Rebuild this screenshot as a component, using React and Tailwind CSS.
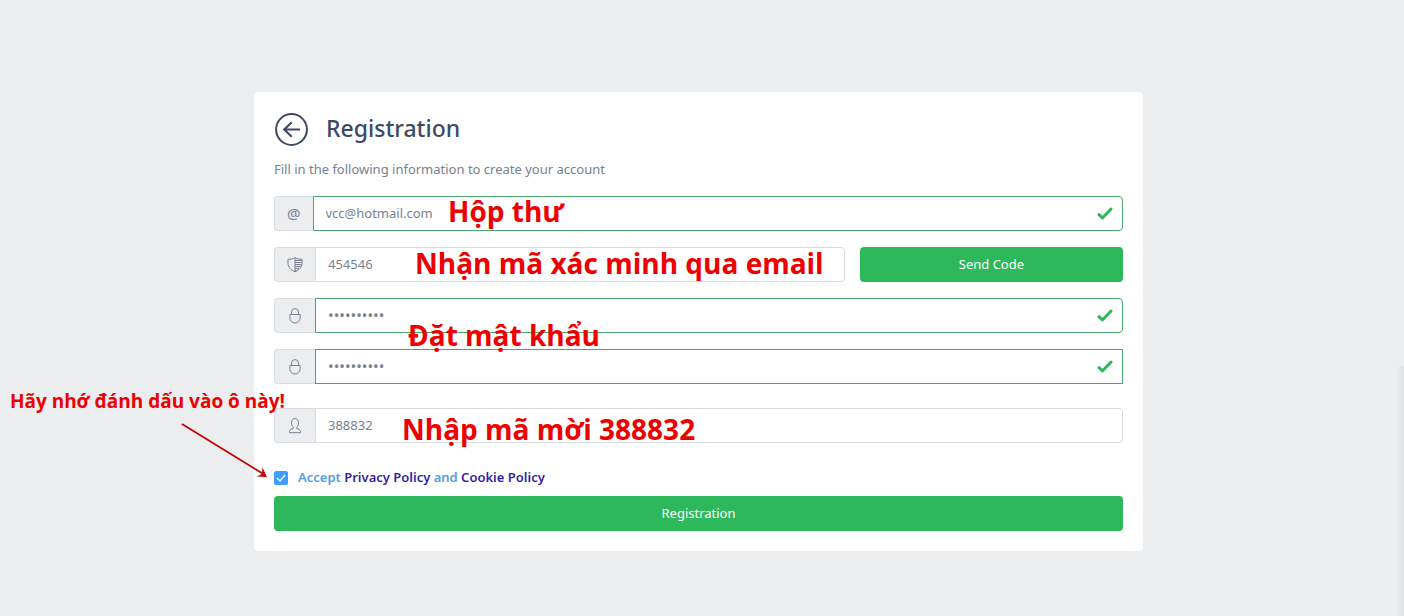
import React, { useState } from "react";

function BackIcon() {
  return (
    <svg viewBox="0 0 34 34" className="h-[34px] w-[34px]" fill="none" stroke="currentColor" strokeWidth="2">
      <circle cx="17.5" cy="17.5" r="15.4" />
      <path d="M26 17.5H10M17.7 10.3 10.2 17.5l7.5 7.2" strokeWidth="2.1" />
    </svg>
  );
}

function ShieldIcon() {
  return (
    <svg viewBox="0 0 16 16" className="h-4 w-4" fill="none" stroke="currentColor">
      <path d="M8 .6C6.2 2 3.600 2.300 1 2.300v3.800c0 4 2.800 7 7 8.700 4.200-1.700 7-4.700 7-8.700V2.300C12.400 2.300 9.800 2 8 .6z" />
      <path d="M8 1v13.500M8 3.500h6.500M8 5.500h6.500M8 7.500h6.500M8 9.500h5.500M8 11.500h4M8 13.500h1.500" />
    </svg>
  );
}

function LockIcon() {
  return (
    <svg viewBox="0 0 16 16" className="h-4 w-4" fill="none" stroke="currentColor">
      <path d="M2.900 6.500h10.200v3.400a5.100 5.100 0 0 1-10.200 0z" strokeLinejoin="round" />
      <path d="M4.500 6.500V4.100a3.500 3.500 0 0 1 7 0v2.400" />
    </svg>
  );
}

function UserIcon() {
  return (
    <svg viewBox="0 0 16 16" className="h-4 w-4" fill="none" stroke="currentColor" strokeLinejoin="round">
      <path d="M8 .6C5.700.6 4.500 2.200 4.500 4.600c0 2.100.7 3.900 1.800 4.800v1.100c-2 .8-3.800 1.200-3.800 3v1.200h11v-1.200c0-1.800-1.800-2.200-3.800-3V9.400c1.100-.9 1.800-2.700 1.800-4.800C11.500 2.200 10.300.6 8 .6z" />
    </svg>
  );
}

function CheckIcon() {
  return (
    <svg viewBox="0 0 16 14" className="pointer-events-none absolute right-[10px] top-[11px] h-[14px] w-4" fill="none">
      <path d="M2 7.6 5.4 11 14 2" stroke="#2eb85c" strokeWidth="3" strokeLinecap="round" strokeLinejoin="round" />
    </svg>
  );
}

// Red hint placed over the form
function Note({ children, className }) {
  return (
    <span
      className={`pointer-events-none absolute z-10 whitespace-nowrap font-['Open_Sans',sans-serif] font-bold text-[#ee0000] ${className}`}
    >
      {children}
    </span>
  );
}

function Field({ label, icon, type = "text", value, onChange, valid, square, note, className = "" }) {
  return (
    <div className={`relative flex h-[35px] ${className}`}>
      <span
        aria-hidden="true"
        className="flex items-center rounded-l border border-r-0 border-[#d8dbe0] bg-[#ebedef] px-3 text-[15px] text-[#768192]"
      >
        {icon}
      </span>
      <input
        aria-label={label}
        type={type}
        value={value}
        onChange={onChange}
        className={`min-w-0 flex-1 border bg-white px-3 text-[#768192] outline-none
          ${type === "password" ? "text-[15px]" : "text-[13px]"}
          ${square ? "rounded-none" : "rounded-r"}
          ${valid ? "border-[#4aa66a]" : "border-[#d8dbe0]"}`}
      />
      {valid && <CheckIcon />}
      {note}
    </div>
  );
}

export default function App() {
  const [form, setForm] = useState({
    email: "vcc@hotmail.com",
    code: "454546",
    password: "abcdefghij",
    confirm: "abcdefghij",
    invite: "388832",
    accept: true,
  });

  const update = (key) => (e) => setForm({ ...form, [key]: e.target.value });

  return (
    <div className="relative flex min-h-screen items-center justify-center overflow-hidden bg-[#ebedef] pt-[27px] pr-[7px] font-['Noto_Sans',sans-serif] text-[13px] leading-[21px]">
      <form onSubmit={(e) => e.preventDefault()} className="relative w-full max-w-[889px] rounded bg-white p-5">
        <div className="flex items-center gap-[18px] text-[#3c4b64]">
          <button type="button" aria-label="Back">
            <BackIcon />
          </button>
          <h1 className="pb-0.5 text-[23px] leading-[30px] font-medium">Registration</h1>
        </div>
        <p className="mt-[13px] mb-4 text-[#768192]">Fill in the following information to create your account</p>

        <Field
          label="Email"
          icon="@"
          value={form.email}
          onChange={update("email")}
          valid
          className="mb-4"
          note={<Note className="left-[174px] -top-[3px] text-[28px] leading-9">Hộp thư</Note>}
        />

        <div className="mb-4 flex gap-[15px]">
          <Field
            label="Verification code"
            icon={<ShieldIcon />}
            value={form.code}
            onChange={update("code")}
            className="flex-1"
            note={<Note className="left-[141px] -top-[2px] text-[28px] leading-9">Nhận mã xác minh qua email</Note>}
          />
          <button type="button" className="w-[31%] rounded bg-[#2eb85c] text-white">
            Send Code
          </button>
        </div>

        <Field
          label="Password"
          icon={<LockIcon />}
          type="password"
          value={form.password}
          onChange={update("password")}
          valid
          className="mb-4"
          note={<Note className="left-[134px] top-[19px] text-[28px] leading-9">Đặt mật khẩu</Note>}
        />
        <Field
          label="Repeat password"
          icon={<LockIcon />}
          type="password"
          value={form.confirm}
          onChange={update("confirm")}
          valid
          square
          className="mb-6"
        />
        <Field
          label="Invitation code"
          icon={<UserIcon />}
          value={form.invite}
          onChange={update("invite")}
          className="mb-6"
          note={<Note className="left-[128px] top-[3px] text-[28px] leading-9">Nhập mã mời 388832</Note>}
        />

        <div className="relative mb-2 flex items-center font-semibold">
          <span className="relative flex h-[14px] w-[14px]">
            <input
              id="accept"
              type="checkbox"
              checked={form.accept}
              onChange={(e) => setForm({ ...form, accept: e.target.checked })}
              className="peer h-[14px] w-[14px] appearance-none rounded-[2px] border border-[#409eff] bg-white checked:bg-[#409eff]"
            />
            <svg viewBox="0 0 14 14" className="pointer-events-none absolute inset-0 hidden peer-checked:block" fill="none">
              <path d="m3 7 3 3 5-6" stroke="#fff" strokeWidth="1.2" />
            </svg>
          </span>
          <span className="pl-[10px] text-[#559de0]">
            <label htmlFor="accept">Accept</label>{" "}
            <a href="#privacy" className="text-[#321fa8]">Privacy Policy</a> and{" "}
            <a href="#cookies" className="text-[#321fa8]">Cookie Policy</a>
          </span>
          <Note className="right-full -mr-[11px] -top-[78px] text-[19px] leading-6">Hãy nhớ đánh dấu vào ô này!</Note>
          <svg viewBox="0 0 88 56" className="pointer-events-none absolute right-full mr-[5px] bottom-[9px] h-14 w-[88px]" fill="none">
            <path d="M1 1 84 52" stroke="#c40000" strokeWidth="1.8" />
            <path d="m86 54-10.500-.5 5.500-2.500.5-6.500z" fill="#c40000" />
          </svg>
        </div>

        <button type="submit" className="h-[35px] w-full rounded bg-[#2eb85c] text-white">
          Registration
        </button>
      </form>
      <div className="absolute right-0 bottom-0 h-[250px] w-2 bg-linear-to-r from-transparent to-black/5" />
    </div>
  );
}
